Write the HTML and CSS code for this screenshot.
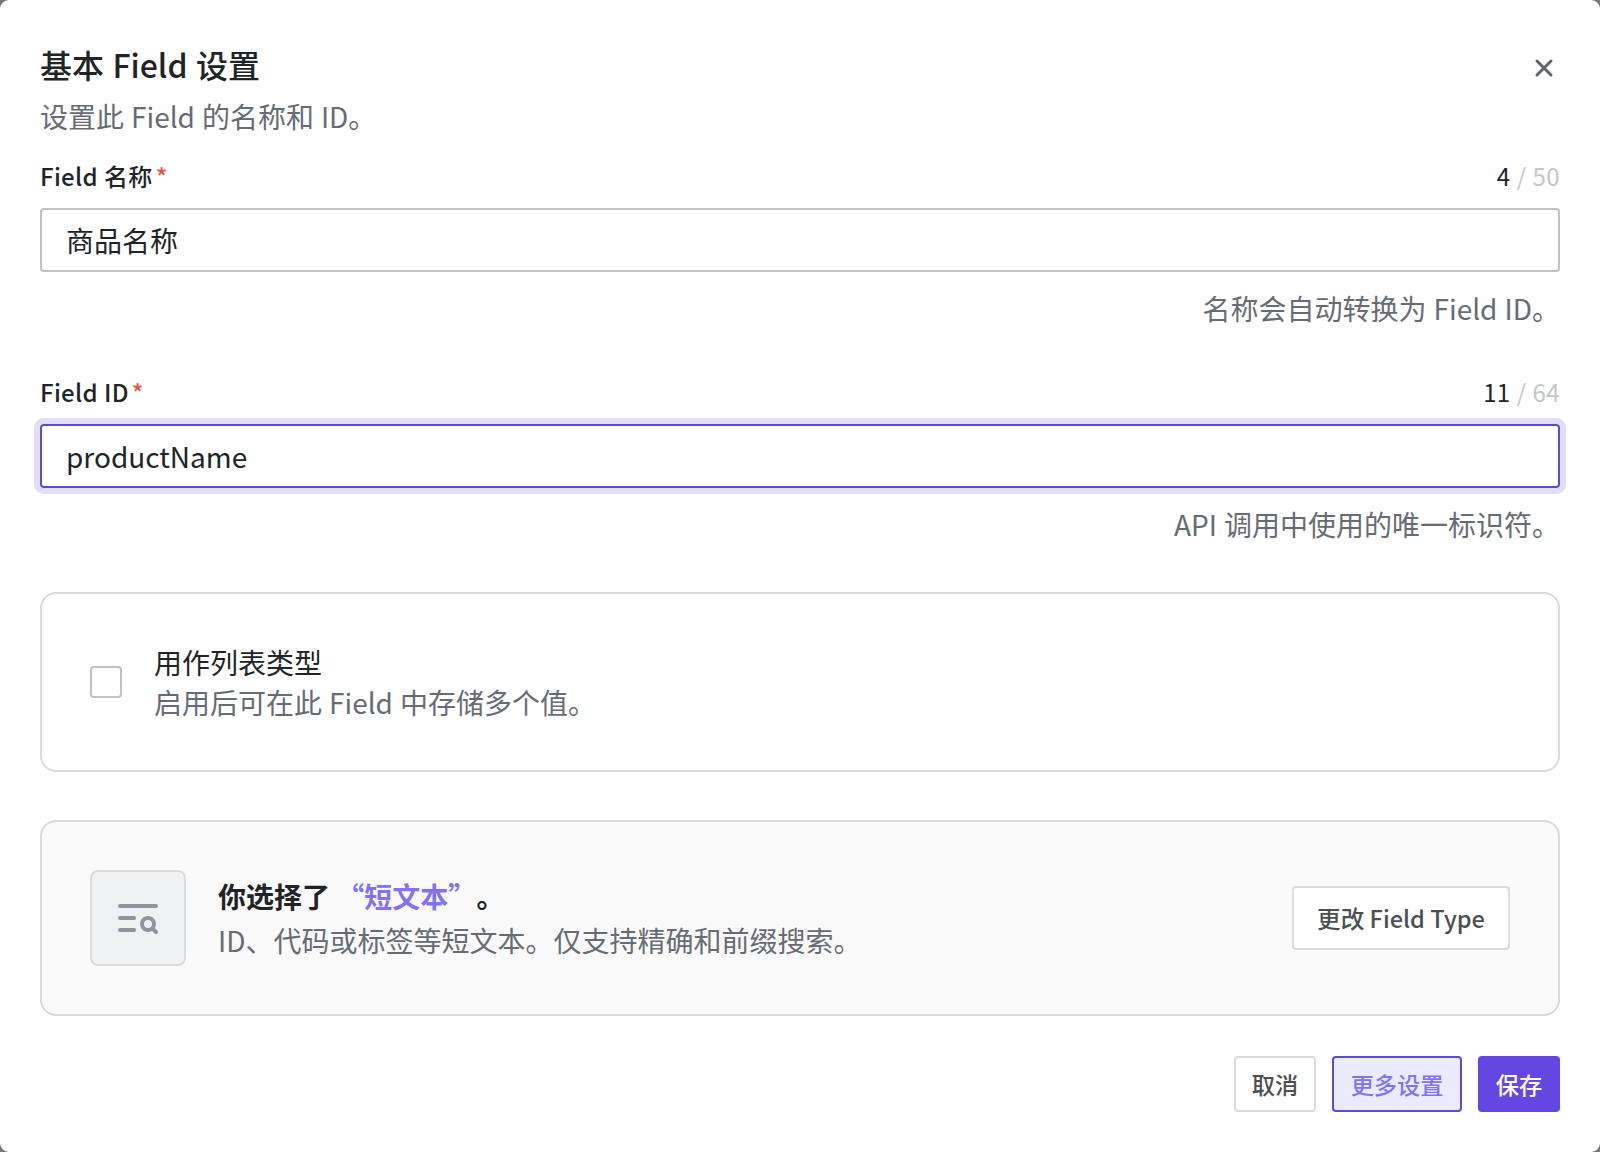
FILE: index.html
```html
<!doctype html>
<html lang="zh-CN">
<head>
	<meta charset="utf-8">
	<title>基本 Field 设置</title>
	<link rel="stylesheet" href="styles.css">
</head>
<body>

	<div class="modal">
		<div class="header">
			<div>
				<h1>基本 Field 设置</h1>
				<p class="desc">设置此 Field 的名称和 ID。</p>
			</div>
			<button type="button" class="close" aria-label="关闭">
				<svg width="32" height="32" viewBox="0 0 32 32"><path d="M9 9l14 14M23 9L9 23" /></svg>
			</button>
		</div>

		<div class="field">
			<div class="labelrow">
				<label for="fieldname">Field 名称<span class="required">*</span></label>
				<span class="counter"><b>4</b> / 50</span>
			</div>
			<input type="text" id="fieldname" value="商品名称" />
			<p class="hint">名称会自动转换为 Field ID。</p>
		</div>

		<div class="field">
			<div class="labelrow">
				<label for="fieldid">Field ID<span class="required">*</span></label>
				<span class="counter"><b>11</b> / 64</span>
			</div>
			<input type="text" id="fieldid" class="focused" value="productName" />
			<p class="hint">API 调用中使用的唯一标识符。</p>
		</div>

		<label class="card listcard">
			<input type="checkbox" class="check" />
			<span class="cardtext">
				<span class="listtitle">用作列表类型</span>
				<span class="sub">启用后可在此 Field 中存储多个值。</span>
			</span>
		</label>

		<div class="card typecard">
			<div class="typeicon">
				<svg width="48" height="48" viewBox="0 0 48 48">
					<path d="M6 12h36M6 24h14M6 36h14" />
					<circle cx="34" cy="30" r="6" />
					<path d="M38.5 34.5l3.5 3.5" />
				</svg>
			</div>
			<div class="cardtext typetext">
				<strong>你选择了 <em>“短文本”</em>。</strong>
				<span class="sub">ID、代码或标签等短文本。仅支持精确和前缀搜索。</span>
			</div>
			<button type="button" class="btn change">更改 Field Type</button>
		</div>

		<div class="footer">
			<button type="button" class="btn">取消</button>
			<button type="button" class="btn more">更多设置</button>
			<button type="button" class="btn save">保存</button>
		</div>
	</div>

</body>
</html>
```
FILE: styles.css
```css
* {margin:0; padding:0; box-sizing:border-box;}
body {background:#777; font:28px/40px "Noto Sans CJK SC",sans-serif; color:#212426;}
input, button {font-family:inherit; color:inherit;}

.modal {height:1152px; padding:40px; background:#fff; border-radius:9px;}

.header {display:flex; justify-content:space-between; height:116px;}
h1 {font-size:32px; line-height:48px; font-weight:500; word-spacing:1.2px;}
.desc {line-height:56px; color:#676b74; word-spacing:0.7px;}
.close {width:32px; height:32px; margin-top:12px; border:0; background:none;}
.close svg {display:block; fill:none; stroke:#5f636d; stroke-width:3; stroke-linecap:round;}

.field {height:216px;}
.labelrow {display:flex; justify-content:space-between; height:52px; padding-top:4px; font-size:24px; line-height:32px;}
.labelrow label {font-weight:500; letter-spacing:0.3px; word-spacing:0.5px;}
.required {margin-left:3px; color:#e5534b;}
.counter {color:#c3c6c9; letter-spacing:0.4px; word-spacing:0.3px;}
.counter b {font-weight:400; color:#212426;}
input[type="text"] {display:block; width:100%; height:64px; padding:0 24px; border:2px solid #c0c1c3; border-radius:4px; background:#fff; font-size:28px; outline:none;}
input.focused {border-color:#624bcb; box-shadow:0 0 0 6px #e1ddfb;}
.hint {padding-top:16px; text-align:right; color:#676b74; word-spacing:0.8px;}

.card {display:flex; align-items:center; padding:0 48px; border:2px solid #dadbdc; border-radius:16px;}
.cardtext {display:flex; flex-direction:column; margin-left:32px;}
.sub {color:#676b74; word-spacing:0.7px;}
.listcard {height:180px; margin-top:4px;}
.check {appearance:none; width:32px; height:32px; border:2px solid #c0c1c3; border-radius:4px; background:#fff;}

.typecard {height:196px; margin-top:48px; background:#fafafa;}
.typeicon {display:flex; align-items:center; justify-content:center; width:96px; height:96px; border:2px solid #dadbdc; border-radius:8px; background:#f0f1f3;}
.typeicon svg {fill:none; stroke:#9094a0; stroke-width:4; stroke-linecap:round;}
.typetext {flex:1; gap:4px;}
.typetext em {margin-right:14px; font-style:normal; color:#8271fa;}

.btn {height:56px; border:2px solid #dadbdc; border-radius:4px; background:#fff; font-size:23.2px; font-weight:500; color:#4c4f52;}
.change {width:218px; height:64px; font-size:23.6px;}
.footer {display:flex; justify-content:flex-end; gap:16px; margin-top:40px;}
.footer .btn {width:82px;}
.footer .more {width:130px; border-color:#624bcb; background:#ebebff; color:#8271fa;}
.save {border-color:#6347e0; background:#6347e0; color:#fff;}
```
